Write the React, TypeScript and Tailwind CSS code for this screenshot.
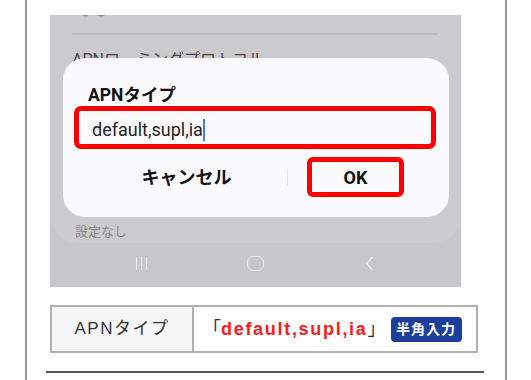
import React from "react";

const jp = "font-['Roboto','Noto_Sans_CJK_JP',sans-serif]";
const jp2 = "font-['Liberation_Sans','Noto_Sans_CJK_JP',sans-serif]";

function NavBar() {
  return (
    <div className="h-[44px] bg-[#c7c7c9] flex justify-center items-center gap-[94px] pb-[4px]">
      <div className="w-[20px] flex justify-center gap-[3.5px]">
        <span className="w-[1.5px] h-[13px] bg-[#ececee]" />
        <span className="w-[1.5px] h-[13px] bg-[#ececee]" />
        <span className="w-[1.5px] h-[13px] bg-[#ececee]" />
      </div>
      <div className="w-[20px] flex justify-center">
        <span className="w-[17px] h-[15px] rounded-[6px] border-[1.5px] border-[#ececee]" />
      </div>
      <div className="w-[20px] flex justify-center">
        <svg width="9" height="15" viewBox="0 0 9 15" fill="none">
          <path d="M7.5 1 L1.5 7.5 L7.5 14" stroke="#ececee" strokeWidth="1.5" />
        </svg>
      </div>
    </div>
  );
}

function Dialog() {
  return (
    <div className={`absolute left-[13px] top-[43px] w-[386px] h-[159px] rounded-[22px] bg-[#fbfbfd] ${jp}`}>
      <div className="pl-[25px] pt-[26px] text-[17.5px] leading-[22px] font-bold text-[#111]">APNタイプ</div>
      <div className="ml-[11px] w-[362px] h-[43px] border-[5px] border-[#ff0000] rounded-[7px] flex items-center pl-[13px] pt-[5px]">
        <span className="text-[18px] leading-[22px] text-[#222]">default,supl,ia</span>
        <span className="w-[2px] h-[22px] bg-[#3d7bf0]" />
      </div>
      <div className="mt-[8px] flex items-center pl-[25px]">
        <div className="w-[197px] text-center text-[18px] font-bold text-[#111]">キャンセル</div>
        <span className="ml-[2px] w-px h-[17px] bg-[#e4e4e6]" />
        <div className="ml-[19px] w-[97px] h-[40px] border-[5px] border-[#ff0000] rounded-[6px] flex items-center justify-center text-[18px] font-bold text-[#111]">
          OK
        </div>
      </div>
    </div>
  );
}

function Screenshot() {
  return (
    <div className="relative w-[411px] h-[272px] bg-[#c7c7c9] overflow-hidden">
      <div className={`h-[228px] bg-[#cbcbcd] rounded-b-[28px] pl-[22px] flex flex-col ${jp}`}>
        <div className="-mt-[15px] ml-[5px] h-[20px] text-[16px] leading-[20px] text-[#8a8a8c]">なし</div>
        <div className="mt-[13px] w-[366px] h-[2px] bg-[#bdbdbf]" />
        <div className="mt-[15px] text-[16px] leading-[20px] text-[#444]">APNローミングプロトコル</div>
        <div className="mt-[154px] ml-[3px] text-[13px] leading-[16px] text-[#858587]">設定なし</div>
      </div>
      <NavBar />
      <Dialog />
    </div>
  );
}

function InfoTable() {
  return (
    <div className={`mt-[18px] w-[428px] h-[48px] border-2 border-[#b0b0b2] flex ${jp2}`}>
      <div className="w-[142px] bg-[#f6f6f6] border-r-2 border-[#b0b0b2] flex items-center justify-center text-[17px] tracking-[1.5px] text-[#333]">
        APNタイプ
      </div>
      <div className="flex-1 bg-white flex items-center pl-[9px]">
        <span className="text-[18px] text-[#333]">「</span>
        <span className="text-[18px] font-bold tracking-[1.7px] text-[#ff1a1a]">default,supl,ia</span>
        <span className="text-[18px] text-[#333]">」</span>
        <span className="ml-[5px] w-[71px] h-[25px] rounded-[4px] bg-[#1d3f9c] text-white text-[14px] font-bold tracking-[1px] flex items-center justify-center">
          半角入力
        </span>
      </div>
    </div>
  );
}

export default function App() {
  return (
    <div className="w-[531px] h-[380px] bg-white overflow-hidden">
      <div className="ml-[25px] w-[482px] h-full border-x-2 border-[#9a9a9a] pt-[15px] pl-[23px]">
        <Screenshot />
        <InfoTable />
        <div className="mt-[18px] -ml-[4px] w-[438px] h-[2px] bg-[#555]" />
      </div>
    </div>
  );
}
